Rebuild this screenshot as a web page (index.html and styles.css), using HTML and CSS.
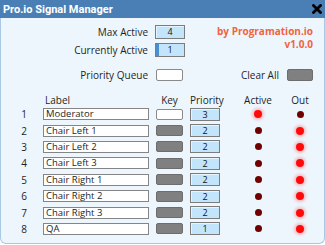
FILE: index.html
```html
<!DOCTYPE html>
<html lang="en">
<head>
  <meta charset="UTF-8">
  <title>Pro.io Signal Manager</title>
  <link rel="stylesheet" href="styles.css">
</head>
<body>
  <div class="window">
    <div class="titlebar">
      <span class="title">Pro.io Signal Manager</span>
      <svg class="close" width="10" height="10" viewBox="0 0 10 10">
        <path d="M1.5 1.5 L8.5 8.5 M8.5 1.5 L1.5 8.5" stroke="#000" stroke-width="2.8" stroke-linecap="square"/>
      </svg>
    </div>
    <div class="panel">
      <div class="settings">
        <div class="setting-grid">
          <span class="setting-label">Max Active</span>
          <div class="num-box">4</div>
          <span class="setting-label">Currently Active</span>
          <div class="num-box progress">1</div>
        </div>
        <div class="brand">
          <div>by Programation.io</div>
          <div>v1.0.0</div>
        </div>
      </div>

      <div class="queue-row">
        <span class="setting-label">Priority Queue</span>
        <div class="key-box empty"></div>
        <span class="setting-label">Clear All</span>
        <div class="key-box"></div>
      </div>

      <div class="signals" id="signals">
        <div class="row head">
          <span class="idx"></span>
          <span class="label-col">Label</span>
          <span class="key-col">Key</span>
          <span class="prio-col">Priority</span>
          <span class="led-col">Active</span>
          <span class="led-col out">Out</span>
        </div>
      </div>
    </div>
  </div>

  <script>
    const signals = [
      { name: 'Moderator', key: false, prio: 3, active: true, out: false },
      { name: 'Chair Left 1', key: true, prio: 2, active: false, out: true },
      { name: 'Chair Left 2', key: true, prio: 2, active: false, out: true },
      { name: 'Chair Left 3', key: true, prio: 2, active: false, out: true },
      { name: 'Chair Right 1', key: true, prio: 2, active: false, out: true },
      { name: 'Chair Right 2', key: true, prio: 2, active: false, out: true },
      { name: 'Chair Right 3', key: true, prio: 2, active: false, out: true },
      { name: 'QA', key: true, prio: 1, active: false, out: true }
    ];

    const list = document.getElementById('signals');
    signals.forEach((s, i) => {
      const row = document.createElement('div');
      row.className = 'row';
      row.innerHTML =
        '<span class="idx">' + (i + 1) + '</span>' +
        '<span class="label-col"><span class="text-box">' + s.name + '</span></span>' +
        '<span class="key-col"><span class="key-box' + (s.key ? '' : ' empty') + '"></span></span>' +
        '<span class="prio-col"><span class="num-box">' + s.prio + '</span></span>' +
        '<span class="led-col"><span class="led' + (s.active ? ' on' : '') + '"></span></span>' +
        '<span class="led-col out"><span class="led' + (s.out ? ' on' : '') + '"></span></span>';
      list.appendChild(row);
    });
  </script>
</body>
</html>
```

FILE: styles.css
```css
body { margin: 0; font-family: "Open Sans", Arial, sans-serif; font-size: 10px; color: #1e1e1e; background: #fff; }
.window { width: 325px; height: 244px; display: flex; flex-direction: column; }
.titlebar { height: 18px; flex: none; background: #4a7fb5; display: flex; align-items: center; justify-content: space-between; padding: 0 3px 0 3px; }
.title { color: #fff; font-family: Roboto, Arial, sans-serif; font-weight: bold; font-size: 11px; }
.close { display: block; }
.panel { flex: 1; background: #eef6fd; border: 1px solid #a9c8e6; border-top: none; border-radius: 0 0 6px 6px; padding: 7px 11px 0 0; }

.settings { display: flex; justify-content: space-between; }
.setting-grid { display: grid; grid-template-columns: 147px 30px; column-gap: 7px; row-gap: 4px; grid-auto-rows: 14px; align-items: center; }
.setting-label { text-align: right; }
.brand { color: #f0643c; font-weight: bold; font-size: 10px; line-height: 13px; text-align: right; margin-top: 0; }

.num-box { display: block; box-sizing: border-box; height: 14px; border: 1px solid #7c7c7c; background: #c3e5fc; box-shadow: inset 1px 1px 0 #e6f4fe; text-align: center; font-size: 9px; line-height: 12px; color: #111; }
.num-box.progress { box-shadow: inset 3px 0 0 #4b8fd0; }

.queue-row { display: grid; grid-template-columns: 147px 27px 1fr 26px; column-gap: 8px; height: 12px; align-items: center; margin-top: 11px; }
.key-box { display: block; box-sizing: border-box; height: 11px; border: 1px solid #6d6d6d; border-radius: 2px; background: #808080; }
.key-box.empty { background: #fff; border-color: #8a8a8a; }
.queue-row .key-box { height: 12px; }

.signals { margin-top: 13px; }
.row { display: flex; align-items: center; height: 16.4px; }
.row.head { height: 13px; }
.idx { width: 42px; box-sizing: border-box; padding-right: 16px; text-align: right; }
.label-col { width: 106px; margin-right: 7px; }
.head .label-col { padding-left: 2px; box-sizing: border-box; }
.key-col { width: 27px; margin-right: 7px; text-align: center; }
.prio-col { width: 30px; margin-right: 8px; text-align: center; }
.led-col { width: 60px; display: flex; justify-content: center; }
.led-col.out { width: 24px; }

.text-box { display: block; box-sizing: border-box; height: 12px; border: 1px solid #858585; background: #fff; padding-left: 2px; font-size: 9.5px; line-height: 10px; white-space: nowrap; overflow: hidden; }
.prio-col .num-box { height: 13px; line-height: 11px; }

.led { display: block; width: 7px; height: 7px; border-radius: 50%; background: #6e0000; }
.led.on { width: 8px; height: 8px; background: #ff0a0a; box-shadow: 0 0 3px 2px rgba(255, 40, 40, 0.28); }
```
